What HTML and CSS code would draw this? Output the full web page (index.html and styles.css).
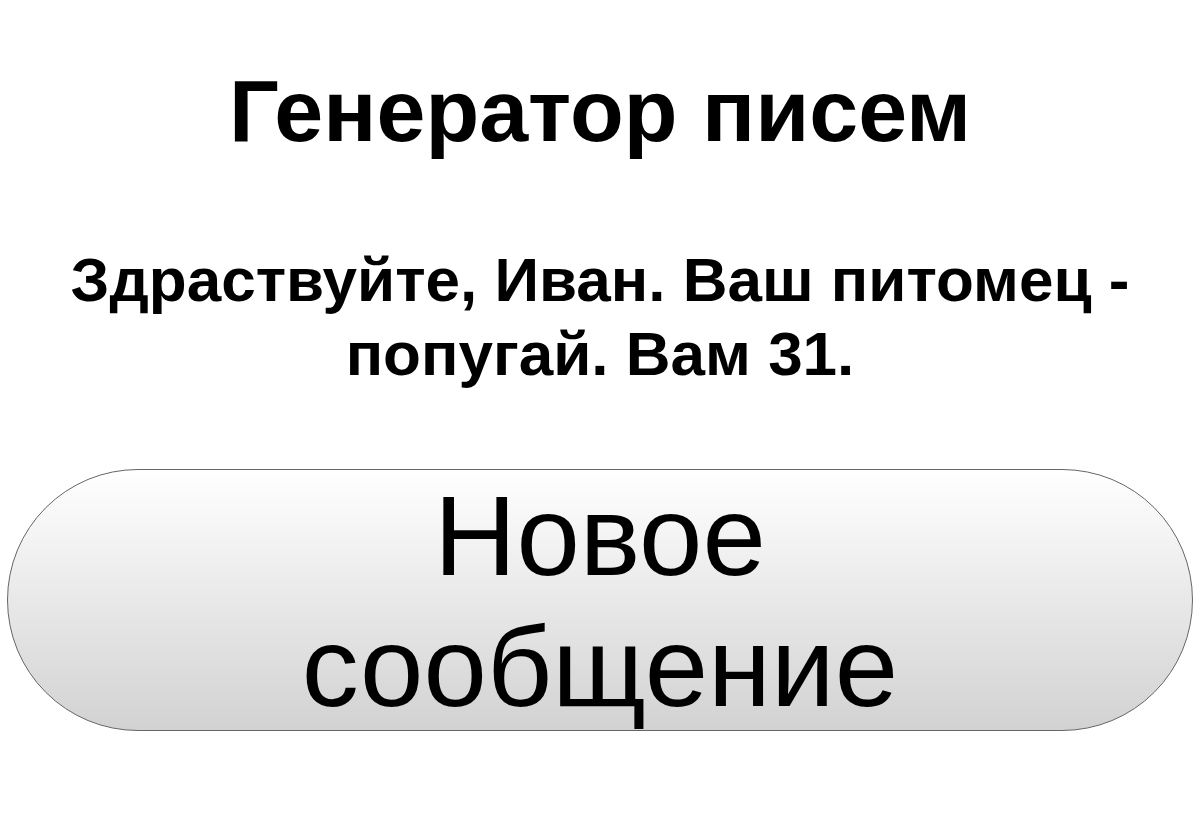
FILE: index.html
```html
<!DOCTYPE html>
<html>

<head>
	<meta charset="utf-8">
	<title>Генератор писем</title>
	<link rel="stylesheet" href="styles.css">
</head>

<body>
	<div class="app">
		<h1 class="title">Генератор писем</h1>
		<p class="message">Здраствуйте, Иван. Ваш питомец - попугай. Вам 31.</p>
		<button class="new-btn">Новое сообщение</button>
	</div>
</body>

</html>
```

FILE: styles.css
```css
body {
	margin: 0;
	font-family: "Liberation Sans", Arial, sans-serif;
	color: #000;
	background: #fff;
}

.app {
	padding: 0 7px;
	text-align: center;
}

.title {
	margin: 0;
	padding-top: 60px;
	font-size: 88px;
	font-weight: bold;
}

.message {
	margin: 81px 40px 0;
	font-size: 62px;
	line-height: 74px;
	font-weight: bold;
}

.new-btn {
	display: block;
	box-sizing: border-box;
	width: 100%;
	height: 262px;
	margin-top: 78px;
	padding: 0 150px;
	font-family: inherit;
	font-size: 114px;
	line-height: 131px;
	color: #000;
	border: 1px solid #666;
	border-radius: 140px;
	background: linear-gradient(#fff, #d2d2d2);
}
```
